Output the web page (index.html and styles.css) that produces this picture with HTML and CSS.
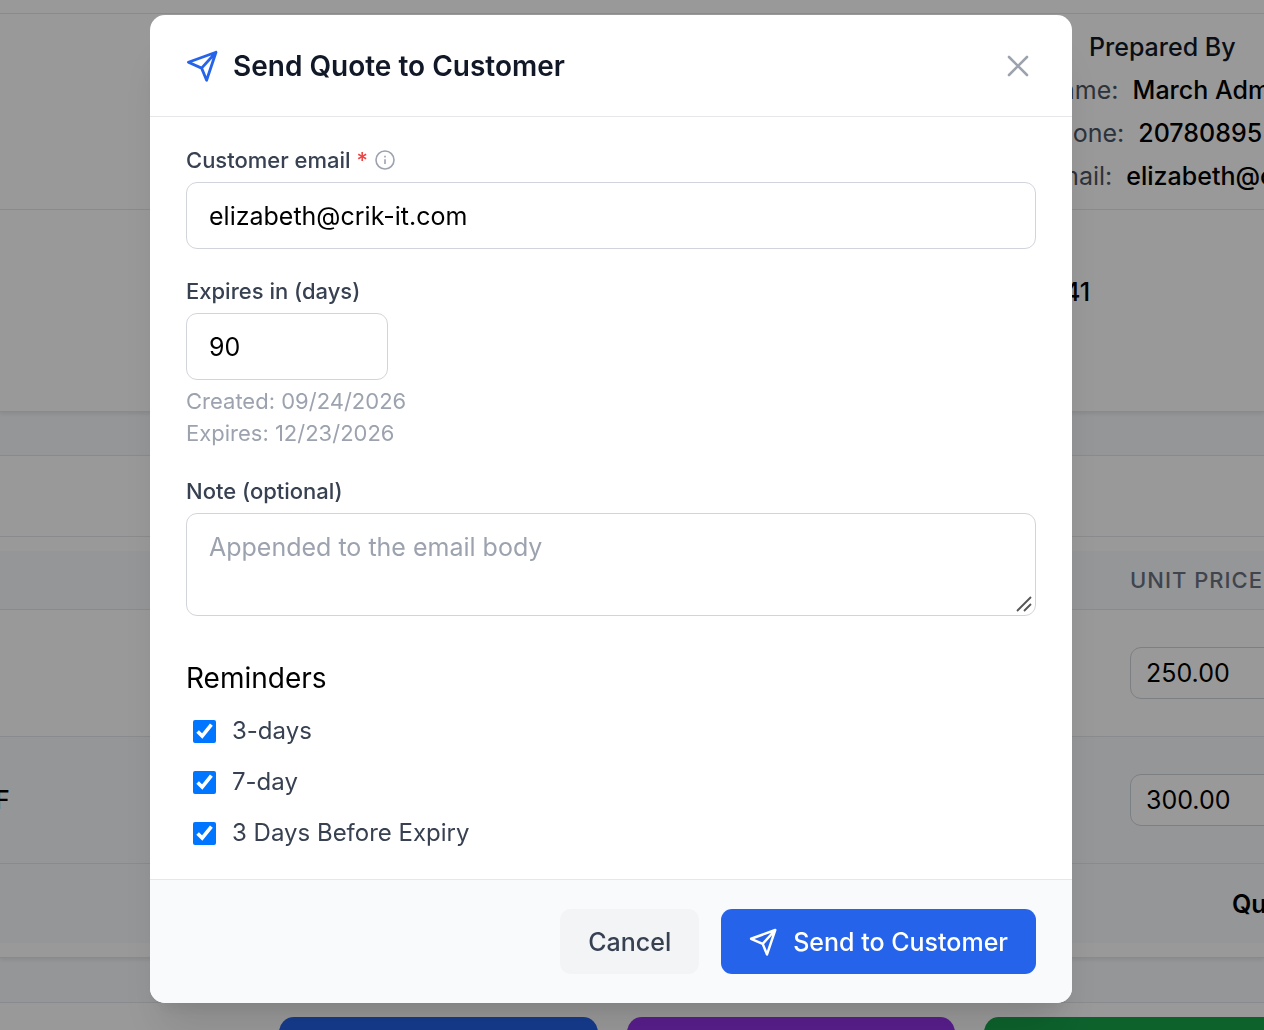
FILE: index.html
```html
<!DOCTYPE html>
<html lang="en">
<head>
<meta charset="utf-8">
<title>Send Quote to Customer</title>
<meta name="viewport" content="width=device-width, initial-scale=1">
<link rel="stylesheet" href="styles.css">
</head>
<body>
<main class="page">
  <section class="card card-quote">
    <div class="strip"></div>
    <div class="section prepared">
      <div class="side">
        <h2 class="prepared-title">Prepared By</h2>
        <dl class="facts">
          <div class="fact"><dt>Name:</dt><dd>March Admin</dd></div>
          <div class="fact"><dt>Phone:</dt><dd>20780895</dd></div>
          <div class="fact"><dt>Email:</dt><dd>elizabeth@crik-it.com</dd></div>
        </dl>
      </div>
    </div>
    <div class="section reference">
      <p class="side reference-number">41</p>
    </div>
  </section>

  <section class="card card-items">
    <div class="toolbar"></div>
    <table class="items">
      <thead>
        <tr><th></th><th class="price-col">UNIT PRICE</th></tr>
      </thead>
      <tbody>
        <tr><td></td><td class="price-col"><input class="price" type="text" value="250.00" aria-label="Unit price"></td></tr>
        <tr class="alt"><td>F</td><td class="price-col"><input class="price" type="text" value="300.00" aria-label="Unit price"></td></tr>
      </tbody>
      <tfoot>
        <tr><td></td><td class="price-col total">Quote</td></tr>
      </tfoot>
    </table>
  </section>

  <div class="actions">
    <button class="action action-blue" type="button" aria-label="Send"></button>
    <button class="action action-purple" type="button" aria-label="Preview"></button>
    <button class="action action-green" type="button" aria-label="Save"></button>
  </div>
</main>

<div class="overlay">
  <form class="modal" role="dialog" aria-labelledby="modal-title">
    <header class="modal-header">
      <svg class="plane" viewBox="0 0 32 32" aria-hidden="true"><path d="M2.4 12.3 30 2.3 20.6 30.2 15.6 18.1ZM15.6 18.1 30 2.3"/></svg>
      <h1 class="modal-title" id="modal-title">Send Quote to Customer</h1>
      <button class="close" type="button" aria-label="Close">
        <svg viewBox="0 0 24 24" aria-hidden="true"><path d="M3 3 21 21M21 3 3 21"/></svg>
      </button>
    </header>

    <div class="modal-body">
      <div class="field">
        <div class="label-row">
          <label class="label" for="email">Customer email <span class="required">*</span></label>
          <svg class="info" viewBox="0 0 20 20" aria-hidden="true"><circle cx="10" cy="10" r="9"/><path d="M10 9.2V14M10 5.8V7.4"/></svg>
        </div>
        <input class="input" id="email" type="email" value="elizabeth@crik-it.com">
      </div>

      <div class="field">
        <label class="label" for="days">Expires in (days)</label>
        <input class="input input-days" id="days" type="text" inputmode="numeric" value="90">
        <p class="hint">Created: 09/24/2026<br>Expires: 12/23/2026</p>
      </div>

      <div class="field">
        <label class="label" for="note">Note (optional)</label>
        <div class="note-wrap">
          <textarea class="input note" id="note" placeholder="Appended to the email body"></textarea>
          <svg class="grip" viewBox="0 0 16 16" aria-hidden="true"><path d="M1 15 15 1M8 15 15 8"/></svg>
        </div>
      </div>

      <fieldset class="reminders">
        <legend class="legend">Reminders</legend>
        <label class="check"><input type="checkbox" checked>3-days</label>
        <label class="check"><input type="checkbox" checked>7-day</label>
        <label class="check"><input type="checkbox" checked>3 Days Before Expiry</label>
      </fieldset>
    </div>

    <footer class="modal-footer">
      <button class="btn btn-cancel" type="button">Cancel</button>
      <button class="btn btn-send" type="submit">
        <svg class="plane plane-small" viewBox="0 0 32 32" aria-hidden="true"><path d="M2.4 12.3 30 2.3 20.6 30.2 15.6 18.1ZM15.6 18.1 30 2.3"/></svg>
        Send to Customer
      </button>
    </footer>
  </form>
</div>
</body>
</html>
```

FILE: styles.css
```css
* {
  box-sizing: border-box;
}

body,
h1,
h2,
p,
dl,
dd {
  margin: 0;
}

body {
  height: 100vh;
  overflow: hidden;
  font-family: Inter, "Liberation Sans", sans-serif;
  font-size: 25px;
  line-height: 36px;
  color: #000;
  background: #fff;
}

button,
input,
textarea {
  font: inherit;
}

/* Quote page behind the dialog */
.page {
  height: 100%;
  overflow: hidden;
  background: #f8fafc;
}

.card {
  background: #fff;
  border-bottom: 1px solid #e5e7eb;
  box-shadow: 0 2px 4px rgba(0, 0, 0, 0.08);
}

.strip {
  height: 14px;
  border-bottom: 1px solid #e5e7eb;
}

.section {
  display: flex;
  justify-content: flex-end;
}

.side {
  width: 222px;
  white-space: nowrap;
}

.prepared {
  height: 196px;
  padding-top: 15px;
  border-bottom: 1px solid #e5e7eb;
}

.prepared-title {
  padding-left: 47px;
  font-size: 25px;
  font-weight: 500;
  color: #111827;
}

.facts {
  display: grid;
  gap: 7px;
  padding-top: 7px;
}

.fact {
  display: flex;
  gap: 14px;
}

.fact dt {
  color: #4b5563;
}

.fact dd {
  font-weight: 500;
}

.reference {
  height: 201px;
  padding-top: 64px;
}

.reference-number {
  padding-left: 22px;
  font-weight: 500;
}

.card-items {
  margin-top: 43px;
  padding-bottom: 14px;
  border-top: 1px solid #e5e7eb;
}

.toolbar {
  height: 81px;
  margin-bottom: 14px;
  border-bottom: 1px solid #e5e7eb;
}

.items {
  width: 100%;
  border-collapse: separate;
  border-spacing: 0;
  table-layout: fixed;
  overflow: hidden;
}

.items th,
.items td {
  padding: 0;
  text-align: left;
  text-indent: -5px;
  white-space: nowrap;
  border-bottom: 1px solid #e5e7eb;
}

.items th {
  height: 59px;
  font-size: 22px;
  font-weight: 500;
  letter-spacing: 1px;
  color: #6b7280;
  background: #f8fafc;
}

.items td {
  height: 127px;
}

.items .price-col {
  width: 134px;
  text-indent: 0;
}

.items .alt td,
.items tfoot td {
  background: #f8fafc;
}

.items .alt td {
  font-weight: 500;
}

.items tfoot td {
  height: 79px;
  border-bottom: 0;
}

.items .total {
  padding-left: 102px;
  font-weight: 600;
}

.price {
  display: block;
  width: 200px;
  height: 52px;
  padding: 0 15px;
  border: 1px solid #d1d5db;
  border-radius: 11px;
  font-weight: 400;
  background: #fff;
}

.actions {
  display: flex;
  gap: 29px;
  margin-top: 44px;
  padding: 14px 0 14px 279px;
  background: #fff;
  border-top: 1px solid #e5e7eb;
}

.action {
  flex: none;
  width: 328px;
  height: 65px;
  border: 0;
  border-radius: 15px;
}

.action-blue {
  width: 319px;
  background: #2563eb;
}

.action-purple {
  background: #9333ea;
}

.action-green {
  background: #16a34a;
}

/* Dialog */
.overlay {
  position: fixed;
  inset: 0;
  display: flex;
  align-items: flex-start;
  justify-content: center;
  padding: 15px 42px 15px 0;
  background: rgba(0, 0, 0, 0.4);
}

.modal {
  width: 100%;
  max-width: 922px;
  border-radius: 15px;
  background: #fff;
  box-shadow: 0 36px 45px -9px rgba(0, 0, 0, 0.1), 0 14px 18px -11px rgba(0, 0, 0, 0.1);
}

.modal-header {
  display: flex;
  align-items: center;
  gap: 15px;
  padding: 32px 36px 31px;
  line-height: 38px;
  border-bottom: 1px solid #e5e7eb;
}

.plane {
  flex: none;
  width: 32px;
  height: 32px;
  fill: none;
  stroke: #2563eb;
  stroke-width: 2.8;
  stroke-linejoin: round;
  stroke-linecap: round;
}

.modal-title {
  flex: 1;
  font-size: 28px;
  font-weight: 600;
  color: #111827;
}

.close {
  display: flex;
  padding: 6px;
  border: 0;
  background: none;
}

.close svg {
  width: 24px;
  height: 24px;
  fill: none;
  stroke: #9ca3af;
  stroke-width: 2.6;
  stroke-linecap: round;
}

.modal-body {
  display: grid;
  gap: 29px;
  padding: 30px 36px 28px;
}

.label-row {
  display: flex;
  align-items: center;
  gap: 7px;
}

.label {
  display: block;
  font-size: 22px;
  font-weight: 500;
  line-height: 26px;
  color: #374151;
}

.required {
  color: #ef4444;
}

.info {
  width: 20px;
  height: 20px;
  fill: none;
  stroke: #9ca3af;
  stroke-width: 1.6;
}

.input {
  display: block;
  width: 100%;
  height: 67px;
  margin-top: 9px;
  padding: 0 22px;
  border: 1px solid #d1d5db;
  border-radius: 11px;
  color: #000;
  background: #fff;
}

.input-days {
  width: 202px;
}

.hint {
  margin-top: 5px;
  font-size: 22px;
  line-height: 32px;
  color: #9ca3af;
}

.note-wrap {
  position: relative;
}

.note {
  height: 103px;
  padding: 15px 22px;
  resize: none;
}

.note::placeholder {
  color: #9ca3af;
}

.grip {
  position: absolute;
  right: 4px;
  bottom: 4px;
  width: 16px;
  height: 16px;
  fill: none;
  stroke: #555;
  stroke-width: 1.8;
}

.reminders {
  display: grid;
  gap: 15px;
  min-width: 0;
  margin: 15px 0 0;
  padding: 0;
  border: 0;
}

.legend {
  margin-bottom: 17px;
  padding: 0;
  font-size: 28px;
}

.check {
  display: flex;
  align-items: center;
  gap: 16px;
  font-size: 24px;
  color: #374151;
}

.check input {
  width: 23px;
  height: 23px;
  margin: 0 0 0 7px;
  accent-color: #0075ff;
}

.modal-footer {
  display: flex;
  justify-content: flex-end;
  gap: 22px;
  padding: 29px 36px;
  border-top: 1px solid #e5e7eb;
  border-radius: 0 0 15px 15px;
  background: #f9fafb;
}

.btn {
  display: flex;
  align-items: center;
  gap: 16px;
  height: 65px;
  padding: 0 28px;
  border: 0;
  border-radius: 11px;
  font-weight: 500;
}

.btn-cancel {
  color: #374151;
  background: #f3f4f6;
}

.btn-send {
  color: #fff;
  background: #2563eb;
}

.plane-small {
  width: 28px;
  height: 28px;
  stroke: #fff;
}
```
